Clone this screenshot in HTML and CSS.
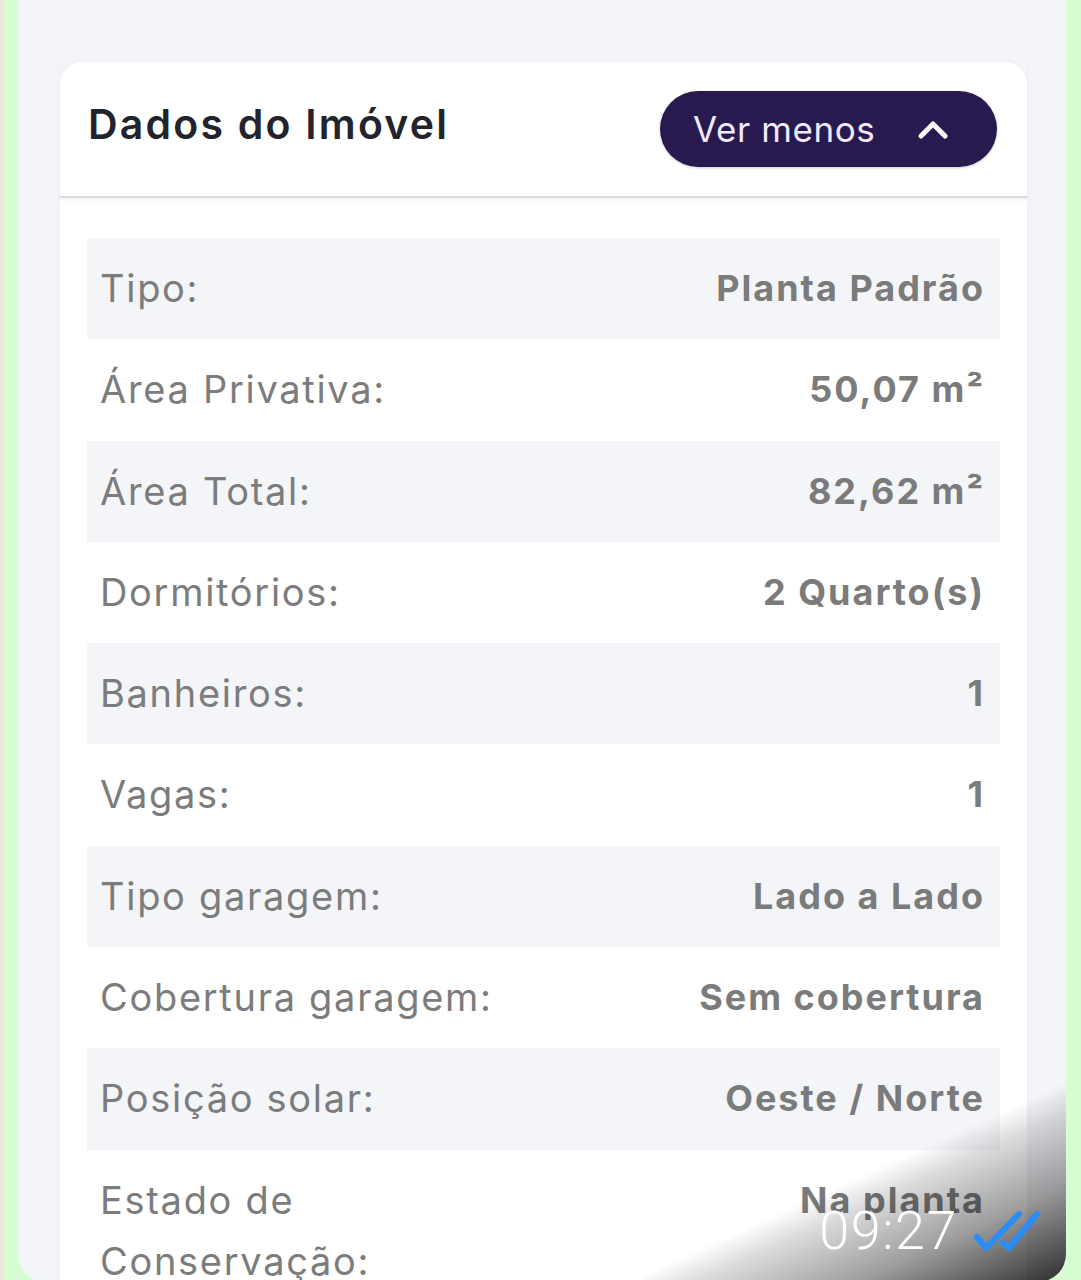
FILE: index.html
```html
<!DOCTYPE html>
<html lang="pt-BR">
<head>
    <meta charset="UTF-8">
    <meta name="viewport" content="width=device-width, initial-scale=1.0">
    <title>Dados do Imóvel</title>
    <link rel="stylesheet" href="styles.css">
</head>
<body>
    <div class="chat">
        <div class="bubble">
            <div class="card">
                <div class="card-head">
                    <h2 class="card-title">Dados do Imóvel</h2>
                    <button class="toggle">
                        <span>Ver menos</span>
                        <svg class="chevron" viewBox="0 0 30 20" width="30" height="20">
                            <polyline points="3,17 15,5 27,17" />
                        </svg>
                    </button>
                </div>
                <dl class="props">
                    <div class="prop"><dt>Tipo:</dt><dd>Planta Padrão</dd></div>
                    <div class="prop"><dt>Área Privativa:</dt><dd>50,07 m²</dd></div>
                    <div class="prop"><dt>Área Total:</dt><dd>82,62 m²</dd></div>
                    <div class="prop"><dt>Dormitórios:</dt><dd>2 Quarto(s)</dd></div>
                    <div class="prop"><dt>Banheiros:</dt><dd>1</dd></div>
                    <div class="prop"><dt>Vagas:</dt><dd>1</dd></div>
                    <div class="prop"><dt>Tipo garagem:</dt><dd>Lado a Lado</dd></div>
                    <div class="prop"><dt>Cobertura garagem:</dt><dd>Sem cobertura</dd></div>
                    <div class="prop"><dt>Posição solar:</dt><dd>Oeste / Norte</dd></div>
                    <div class="prop"><dt>Estado de Conservação:</dt><dd>Na planta</dd></div>
                </dl>
            </div>
            <div class="shade"></div>
            <div class="meta">
                <span class="time">09:27</span>
                <svg class="ticks" viewBox="0 0 66 42" width="66" height="42">
                    <polyline points="3,27 12,38 45,4" />
                    <polyline points="29,33 35,38 63,4" />
                </svg>
            </div>
        </div>
    </div>
</body>
</html>
```

FILE: styles.css
```css
:root {
    --ink: #23232d;
    --muted: #7b7b7b;
    --stripe: #f4f5f9;
    --brand: #281a4e;
    --bubble: #d9fdd3;
}
body {
    margin: 0;
    height: 1280px;
    overflow: hidden;
    background: #ede6dc;
    font-family: 'Inter', 'Liberation Sans', sans-serif;
}
.chat {
    margin-left: 4px;
    height: 1300px;
    background: var(--bubble);
    padding: 0 15px 0 14px;
}
.bubble {
    position: relative;
    height: 1282px;
    overflow: hidden;
    background: var(--stripe);
    border-radius: 0 0 28px 28px;
    padding: 62px 39px 0 42px;
    box-sizing: border-box;
}
.card {
    background: #fff;
    border-radius: 22px 22px 0 0;
    box-shadow: 0 0 8px rgba(0, 0, 0, 0.03);
}
.card-head {
    display: flex;
    justify-content: space-between;
    align-items: center;
    height: 136px;
    box-sizing: border-box;
    padding: 0 30px 0 28px;
    border-bottom: 2px solid #dcdce0;
    box-shadow: 0 2px 3px rgba(0, 0, 0, 0.05);
}
.card-title {
    margin: 0 0 10px;
    font-size: 41px;
    font-weight: 600;
    letter-spacing: 2.2px;
    color: var(--ink);
}
.toggle {
    display: flex;
    align-items: center;
    justify-content: space-between;
    width: 337px;
    height: 76px;
    padding: 0 49px 0 33px;
    border: none;
    border-radius: 38px;
    background: var(--brand);
    color: #efeaff;
    font-family: inherit;
    font-size: 35px;
    letter-spacing: 0.6px;
    box-shadow: 0 1px 3px rgba(0, 0, 0, 0.2);
}
.chevron polyline {
    fill: none;
    stroke: #fff;
    stroke-width: 5;
    stroke-linecap: round;
    stroke-linejoin: round;
}
.props {
    margin: 0;
    padding: 40px 27px 0;
}
.prop {
    display: flex;
    justify-content: space-between;
    align-items: flex-start;
    padding: 20px 15px 20px 13px;
    line-height: 61.3px;
}
.prop:nth-child(odd) {
    background: var(--stripe);
}
.prop dt {
    max-width: 450px;
    font-size: 38px;
    letter-spacing: 1.7px;
    color: #7c7c7c;
}
.prop dd {
    margin: 0;
    font-size: 36px;
    font-weight: 700;
    letter-spacing: 2px;
    color: var(--muted);
    text-align: right;
}
.shade {
    position: absolute;
    right: 0;
    bottom: 0;
    width: 440px;
    height: 200px;
    background: linear-gradient(to bottom right, rgba(0, 0, 0, 0) 50%, rgba(0, 0, 0, 0.14) 58%, rgba(0, 0, 0, 0.38) 76%, rgba(0, 0, 0, 0.82) 100%);
    pointer-events: none;
}
.meta {
    position: absolute;
    right: 26px;
    bottom: 24px;
    display: flex;
    align-items: center;
    gap: 16px;
}
.time {
    font-family: 'Roboto', sans-serif;
    font-weight: 300;
    font-size: 54px;
    letter-spacing: 1.5px;
    line-height: 1;
    color: #fff;
}
.ticks polyline {
    fill: none;
    stroke: #2a8cf7;
    stroke-width: 6;
    stroke-linecap: round;
    stroke-linejoin: round;
}
```
